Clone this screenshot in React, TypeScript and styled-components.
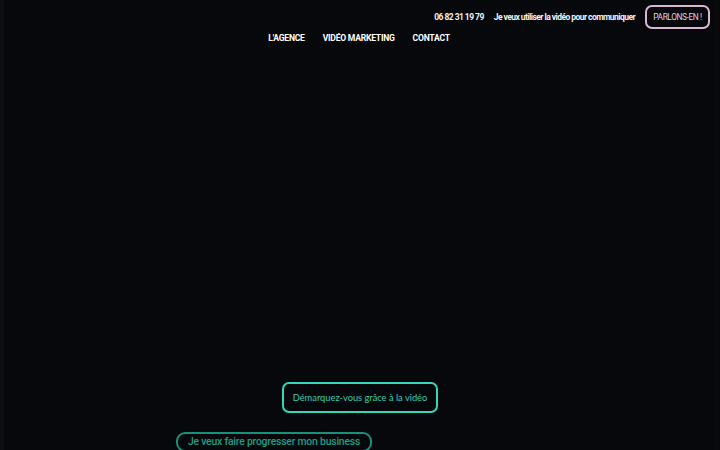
import React from 'react'
import styled, { createGlobalStyle } from 'styled-components'

const GlobalStyle = createGlobalStyle`
  html, body {
    margin: 0;
    padding: 0;
    background: #07080b;
    overflow: hidden;
  }
  * {
    box-sizing: border-box;
  }
`;

export default function App() {
  return (
    <>
      <GlobalStyle />
      <Page>
        <Header>
          <TopBar>
            <TopLink>06 82 31 19 79</TopLink>
            <TopLink>Je veux utiliser la vidéo pour communiquer</TopLink>
            <CallButton>PARLONS-EN !</CallButton>
          </TopBar>
          <Nav>
            <NavLink>L'AGENCE</NavLink>
            <NavLink>VIDÉO MARKETING</NavLink>
            <NavLink>CONTACT</NavLink>
          </Nav>
        </Header>
        <Hero>
          <HeroButton>Démarquez-vous grâce à la vidéo</HeroButton>
        </Hero>
        <Bottom>
          <BusinessButton>Je veux faire progresser mon business</BusinessButton>
        </Bottom>
      </Page>
    </>
  );
}

const Page = styled.div`
  width: 720px;
  height: 450px;
  background: #07080b;
  border-left: 4px solid #0e0f12;
  border-right: 6px solid #0a0a0d;
  display: flex;
  flex-direction: column;
  overflow: hidden;
`;

const Header = styled.header`
  display: flex;
  flex-direction: column;
`;

const TopBar = styled.div`
  display: flex;
  justify-content: flex-end;
  align-items: center;
  gap: 10px;
  padding: 5px 4px 0 0;
  height: 29px;
`;

const TopLink = styled.a`
  font-family: Roboto, "Liberation Sans", sans-serif;
  font-weight: 700;
  font-size: 8.5px;
  letter-spacing: -0.55px;
  color: #f2f2f2;
`;

const CallButton = styled.button`
  width: 65px;
  height: 24px;
  border: 2px solid #d9b6d2;
  border-radius: 7px;
  background: transparent;
  color: #e7cfe2;
  font-family: Roboto, "Liberation Sans", sans-serif;
  font-size: 8.3px;
  letter-spacing: -0.4px;
  font-weight: 400;
  padding: 0;
`;

const Nav = styled.nav`
  display: flex;
  justify-content: center;
  gap: 18px;
  padding: 4px 0 0 0;
`;

const NavLink = styled.a`
  font-family: Roboto, "Liberation Sans", sans-serif;
  font-weight: 700;
  font-size: 8.6px;
  letter-spacing: -0.25px;
  color: #ffffff;
`;

const Hero = styled.section`
  display: flex;
  justify-content: center;
  padding: 339px 0 0 2px;
`;

const HeroButton = styled.button`
  width: 156px;
  height: 31px;
  border: 2px solid #34d7b9;
  border-radius: 7px;
  background: transparent;
  color: #3ccbb0;
  font-family: Lato, "Open Sans", sans-serif;
  font-size: 9.3px;
  padding: 0;
`;

const Bottom = styled.div`
  display: flex;
  padding: 19px 0 0 172px;
`;

const BusinessButton = styled.button`
  width: 196px;
  height: 20px;
  border: 2px solid #1b8f77;
  border-radius: 9px;
  background: transparent;
  color: #1f9f84;
  font-family: Roboto, "Liberation Sans", sans-serif;
  font-size: 10.4px;
  letter-spacing: -0.2px;
  font-weight: 500;
  padding: 0 0 1px;
`;
